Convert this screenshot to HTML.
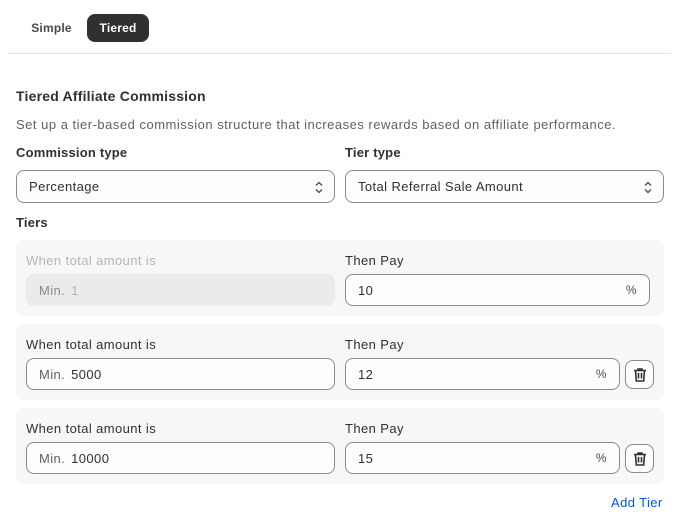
<!DOCTYPE html>
<html><head><style>
*{box-sizing:border-box;margin:0;padding:0}
body{width:675px;height:517px;background:#fff;font-family:"Liberation Sans",sans-serif;color:#303030;position:relative;overflow:hidden;font-size:13px;letter-spacing:0.4px}
.a{position:absolute}
.tab{position:absolute;top:14px;height:28px;line-height:28px;font-weight:bold;font-size:12px;border-radius:8px;letter-spacing:0.2px}
.lbl{position:absolute;font-size:13px;font-weight:bold;color:#303030;letter-spacing:0.2px}
.lb2{position:absolute;font-size:13px;color:#303030}
.box{position:absolute;border:1px solid #8a8a8a;border-radius:8px;background:#fdfdfd;height:33px;line-height:31px;padding-left:12px;font-size:13px}
.card{position:absolute;left:16px;width:648px;height:76px;background:#f7f7f7;border-radius:8px}
.pct{position:absolute;right:12px;top:0;color:#4a4a4a;font-size:12px}
.trash{position:absolute;width:29px;height:29px;border:1px solid #8a8a8a;border-radius:8px;background:#fdfdfd}
.min{color:#616161;margin-right:6px}
</style></head><body>
<div class="tab" style="left:24px;width:55px;text-align:center;color:#4a4a4a">Simple</div>
<div class="tab" style="left:87px;width:62px;text-align:center;background:#303030;color:#fff">Tiered</div>
<div class="a" style="left:8px;top:53px;width:663px;height:1px;background:#e3e3e3"></div>
<div class="lbl" style="left:16px;top:88px;font-size:14px">Tiered Affiliate Commission</div>
<div class="a" style="left:16px;top:117px;color:#616161;font-size:13px;letter-spacing:0.5px">Set up a tier-based commission structure that increases rewards based on affiliate performance.</div>
<div class="lbl" style="left:16px;top:145px">Commission type</div>
<div class="lbl" style="left:345px;top:145px">Tier type</div>
<div class="box" style="left:16px;top:170px;width:319px">Percentage<svg class="a" style="right:10px;top:10px" width="10" height="13" viewBox="0 0 10 13"><path d="M2 4.5L5 1.5 8 4.5M2 8.5L5 11.5 8 8.5" fill="none" stroke="#4a4a4a" stroke-width="1.3"/></svg></div>
<div class="box" style="left:345px;top:170px;width:319px">Total Referral Sale Amount<svg class="a" style="right:10px;top:10px" width="10" height="13" viewBox="0 0 10 13"><path d="M2 4.5L5 1.5 8 4.5M2 8.5L5 11.5 8 8.5" fill="none" stroke="#4a4a4a" stroke-width="1.3"/></svg></div>
<div class="lbl" style="left:16px;top:215px">Tiers</div>

<div class="card" style="top:240px"></div>
<div class="lb2" style="left:26px;top:253px;color:#b5b5b5">When total amount is</div>
<div class="lb2" style="left:345px;top:253px">Then Pay</div>
<div class="box" style="left:26px;top:274px;width:309px;height:32px;border-color:#ebebeb;background:#ebebeb;color:#b5b5b5"><span class="min" style="color:#8a8a8a">Min.</span>1</div>
<div class="box" style="left:345px;top:274px;width:305px;height:32px">10<span class="pct">%</span></div>

<div class="card" style="top:324px"></div>
<div class="lb2" style="left:26px;top:337px">When total amount is</div>
<div class="lb2" style="left:345px;top:337px">Then Pay</div>
<div class="box" style="left:26px;top:358px;width:309px;height:32px"><span class="min">Min.</span>5000</div>
<div class="box" style="left:345px;top:358px;width:275px;height:32px">12<span class="pct">%</span></div>
<div class="trash" style="left:625px;top:360px"><svg class="a" style="left:7px;top:6px" width="14" height="16" viewBox="0 0 14 16"><path d="M1 3.5H13M5 3.5V2H9V3.5M2.5 3.5L3.3 14H10.7L11.5 3.5M5.5 6V11.5M8.5 6V11.5" fill="none" stroke="#303030" stroke-width="1.6"/></svg></div>

<div class="card" style="top:408px"></div>
<div class="lb2" style="left:26px;top:421px">When total amount is</div>
<div class="lb2" style="left:345px;top:421px">Then Pay</div>
<div class="box" style="left:26px;top:442px;width:309px;height:32px"><span class="min">Min.</span>10000</div>
<div class="box" style="left:345px;top:442px;width:275px;height:32px">15<span class="pct">%</span></div>
<div class="trash" style="left:625px;top:444px"><svg class="a" style="left:7px;top:6px" width="14" height="16" viewBox="0 0 14 16"><path d="M1 3.5H13M5 3.5V2H9V3.5M2.5 3.5L3.3 14H10.7L11.5 3.5M5.5 6V11.5M8.5 6V11.5" fill="none" stroke="#303030" stroke-width="1.6"/></svg></div>

<div class="a" style="left:611px;top:495px;color:#005bd3;font-size:13px">Add Tier</div>
</body></html>
